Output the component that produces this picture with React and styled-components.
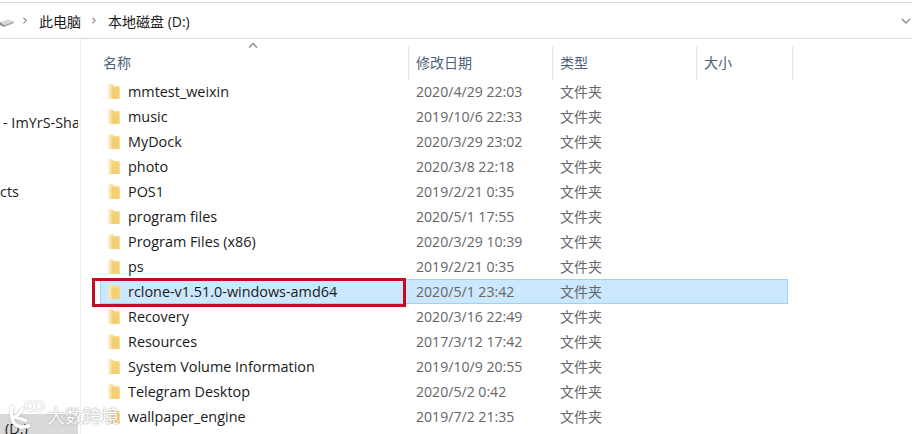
import React from 'react'
import styled, { createGlobalStyle } from 'styled-components'

const GlobalStyle = createGlobalStyle`
html, body {
  margin: 0;
  padding: 0;
  background: #fff;
}
body {
  font-family: "Open Sans", "Noto Sans CJK SC", sans-serif;
}
`

const files = [
  ['mmtest_weixin', '2020/4/29 22:03'],
  ['music', '2019/10/6 22:33'],
  ['MyDock', '2020/3/29 23:02'],
  ['photo', '2020/3/8 22:18'],
  ['POS1', '2019/2/21 0:35'],
  ['program files', '2020/5/1 17:55'],
  ['Program Files (x86)', '2020/3/29 10:39'],
  ['ps', '2019/2/21 0:35'],
  ['rclone-v1.51.0-windows-amd64', '2020/5/1 23:42', true],
  ['Recovery', '2020/3/16 22:49'],
  ['Resources', '2017/3/12 17:42'],
  ['System Volume Information', '2019/10/9 20:55'],
  ['Telegram Desktop', '2020/5/2 0:42'],
  ['wallpaper_engine', '2019/7/2 21:35'],
]

const FolderIcon = () => (
  <FolderSvg viewBox="0 0 12 16">
    <path d="M1 0.5 L5 0.5 L6 2 L11.5 2 L11.5 15 L1 15 Z" fill="#f6d98a" />
    <path d="M0.5 0.5 L3.5 0.5 L3.5 15.5 L0.5 14.5 Z" fill="#fbe8b0" />
    <path d="M3.5 3.5 L11.5 3.5 L11.5 15 L3.5 15 Z" fill="#f4d074" />
  </FolderSvg>
)

const Chevron = ({ d, size = 10 }) => (
  <svg width={size} height={size} viewBox="0 0 10 10" fill="none" stroke="#8a8a8a" strokeWidth="1.4">
    <path d={d} />
  </svg>
)

const DriveIcon = () => (
  <svg width="14" height="8" viewBox="0 0 14 8">
    <path d="M0 3 L9 0.5 L14 2.5 L4 6 Z" fill="#d8d8d8" />
    <path d="M0 3 L4 6 L4 8 L0 6 Z" fill="#8f8f8f" />
    <path d="M4 6 L14 2.5 L14 4 L4 8 Z" fill="#a9a9a9" />
  </svg>
)

export default function App() {
  return (
    <Page>
      <GlobalStyle />
      <AddressBar>
        <Crumbs>
          <DriveSlot><DriveIcon /></DriveSlot>
          <CrumbSep><Chevron size={8} d="M3 1 L6.5 4.5 L3 8" /></CrumbSep>
          <Crumb>此电脑</Crumb>
          <CrumbSep><Chevron size={8} d="M3 1 L6.5 4.5 L3 8" /></CrumbSep>
          <Crumb>本地磁盘 (D:)</Crumb>
        </Crumbs>
        <Chevron d="M1 3 L5 7 L9 3" />
      </AddressBar>
      <Body>
        <Sidebar>
          <SideItem $top={71} $indent={3}>- ImYrS-Shadow</SideItem>
          <SideItem $top={44} $indent={0}>cts</SideItem>
          <SideFill />
          <SideItem $active $indent={5}>(D:)</SideItem>
        </Sidebar>
        <Main>
          <HeaderRow>
            <HeaderCell $w={328} $pad={22}>
              名称
              <SortMark><Chevron d="M1 6.5 L5 2.5 L9 6.5" /></SortMark>
            </HeaderCell>
            <HeaderCell $w={144} $pad={7}>修改日期</HeaderCell>
            <HeaderCell $w={144} $pad={7}>类型</HeaderCell>
            <HeaderCell $w={96} $pad={7}>大小</HeaderCell>
          </HeaderRow>
          <List>
            {files.map(([name, date, selected]) => (
              <Row key={name} $selected={selected}>
                <NameCell>
                  <FolderIcon />
                  <Name>{name}</Name>
                  {selected && <RedBox />}
                </NameCell>
                <DateCell>{date}</DateCell>
                <TypeCell>文件夹</TypeCell>
              </Row>
            ))}
            <Row>
              <NameCell><FolderIcon /></NameCell>
            </Row>
          </List>
        </Main>
      </Body>
      <Watermark>
        <WatermarkLogo width="40" height="30" viewBox="0 0 40 30" fill="none" stroke="#fff">
          <path d="M4 6 C3 12 3 18 6 23 C10 28 17 28 22 25" strokeWidth="3.5" />
          <path d="M15 8 C12 14 9 16 6 17 C10 18 14 19 19 21" strokeWidth="3" />
          <circle cx="22" cy="6" r="4.5" strokeWidth="1.6" />
          <circle cx="31" cy="6" r="4.5" strokeWidth="1.6" />
        </WatermarkLogo>
        <WatermarkText>大数跨境</WatermarkText>
      </Watermark>
    </Page>
  )
}

const Page = styled.div`
position: relative;
width: 912px;
height: 434px;
overflow: hidden;
background: #fff;
display: flex;
flex-direction: column;
padding-top: 2px;
box-sizing: border-box;
`
const AddressBar = styled.div`
height: 37px;
flex: none;
border-top: 1px solid #dcdcdc;
border-bottom: 1px solid #d9d9d9;
display: flex;
align-items: center;
justify-content: space-between;
padding-right: 1px;
box-sizing: border-box;
`
const Crumbs = styled.div`
display: flex;
align-items: center;
font-size: 14px;
color: #1a1a1a;
`
const DriveSlot = styled.div`
width: 21px;
display: flex;
margin-top: 5px;
`
const CrumbSep = styled.div`
width: 18px;
display: flex;
`
const Crumb = styled.span`
margin-right: 9px;
white-space: nowrap;
`
const Body = styled.div`
flex: 1;
display: flex;
min-height: 0;
`
const Sidebar = styled.div`
width: 80px;
flex: none;
border-right: 1px solid #efefef;
display: flex;
flex-direction: column;
overflow: hidden;
`
const SideItem = styled.div`
flex: none;
width: 78px;
height: ${p => p.$active ? '20px' : '25px'};
margin-top: ${p => p.$top || 0}px;
padding-left: ${p => p.$indent}px;
box-sizing: border-box;
background: ${p => p.$active ? '#d9d9d9' : 'transparent'};
font-size: 14.4px;
line-height: ${p => p.$active ? '30px' : '25px'};
color: #1a1a1a;
white-space: nowrap;
overflow: hidden;
`
const SideFill = styled.div`
flex: 1;
`
const Main = styled.div`
flex: 1;
min-width: 0;
display: flex;
flex-direction: column;
`
const HeaderRow = styled.div`
display: flex;
height: 33px;
margin-top: 7px;
flex: none;
`
const HeaderCell = styled.div`
position: relative;
width: ${p => p.$w}px;
padding-left: ${p => p.$pad}px;
box-sizing: border-box;
border-right: 1px solid #e5e5e5;
font-size: 14px;
line-height: 33px;
color: #4c607a;
`
const SortMark = styled.span`
position: absolute;
left: 167px;
top: -5px;
line-height: 0;
`
const List = styled.div`
display: flex;
flex-direction: column;
`
const Row = styled.div`
display: flex;
align-items: center;
flex: none;
height: 25px;
width: 688px;
margin-left: 19px;
box-sizing: border-box;
background: ${p => p.$selected ? '#cce8ff' : 'transparent'};
border: 1px solid ${p => p.$selected ? '#99d1ff' : 'transparent'};
`
const NameCell = styled.div`
position: relative;
width: 315px;
height: 100%;
display: flex;
align-items: center;
padding-left: 7px;
box-sizing: border-box;
`
const FolderSvg = styled.svg`
width: 12px;
height: 16px;
flex: none;
`
const Name = styled.span`
margin-left: 8px;
font-size: 14.4px;
color: #1a1a1a;
white-space: nowrap;
`
const RedBox = styled.div`
position: absolute;
left: -9px;
top: -2px;
width: 314px;
height: 29px;
border: 3px solid #c00d23;
box-sizing: border-box;
`
const DateCell = styled.div`
width: 144px;
font-size: 14.1px;
color: #666;
white-space: nowrap;
`
const TypeCell = styled.div`
font-size: 14px;
color: #666;
margin-top: -2px;
`
const Watermark = styled.div`
position: absolute;
left: 8px;
bottom: 4px;
height: 30px;
display: flex;
align-items: center;
`
const WatermarkLogo = styled.svg`
flex: none;
filter: drop-shadow(0 0 1px rgba(140, 140, 140, 0.6));
`
const WatermarkText = styled.span`
font-size: 18px;
color: #fff;
text-shadow: 0 0 1px rgba(150, 150, 150, 0.9), 0 0 2px rgba(170, 170, 170, 0.7);
margin-left: -1px;
margin-top: 0;
white-space: nowrap;
`
